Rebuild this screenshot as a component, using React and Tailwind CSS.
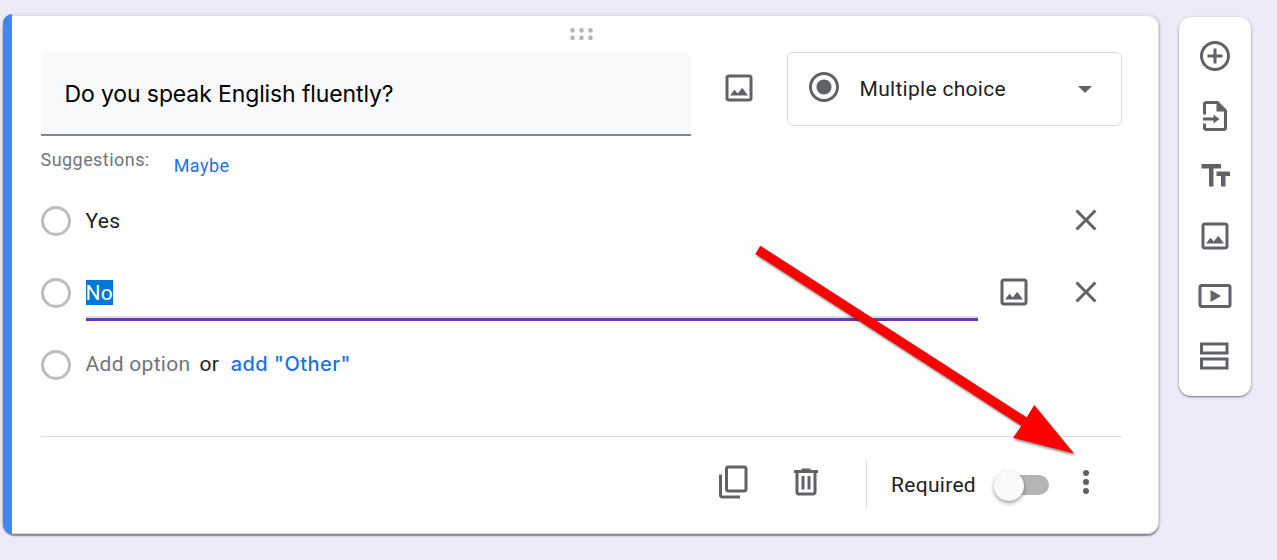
const Icon = ({ children, className = '' }) => (
  <svg viewBox="0 0 24 24" className={'block size-9 shrink-0 fill-[#5f6368] ' + className}>{children}</svg>
);

const ImageIcon = () => (
  <Icon>
    <path d="M19 5v14H5V5h14m0-2H5c-1.1 0-2 .9-2 2v14c0 1.100.9 2 2 2h14c1.100 0 2-.9 2-2V5c0-1.100-.9-2-2-2zm-4.860 8.860l-3 3.870L9 13.140 6 17h12l-3.860-5.140z" />
  </Icon>
);

const CloseIcon = () => (
  <Icon>
    <path d="M19 6.410L17.590 5 12 10.590 6.410 5 5 6.410 10.590 12 5 17.590 6.410 19 12 13.410 17.590 19 19 17.590 13.410 12z" />
  </Icon>
);

const Radio = () => <span className="size-[30px] shrink-0 rounded-full border-3 border-[#bdbdbd]" />;

function Toolbar() {
  return (
    <aside className="mt-[17px] ml-5 flex h-[379px] w-[72px] flex-col items-center gap-6 rounded-xl bg-white pt-[21px] shadow-[0_1px_3px_rgba(60,64,67,0.45),0_1px_1px_rgba(60,64,67,0.35)]">
      <Icon>
        <path d="M13 7h-2v4H7v2h4v4h2v-4h4v-2h-4V7zm-1-5C6.480 2 2 6.480 2 12s4.480 10 10 10 10-4.480 10-10S17.520 2 12 2zm0 18c-4.410 0-8-3.590-8-8s3.590-8 8-8 8 3.590 8 8-3.590 8-8 8z" />
      </Icon>
      <Icon>
        <path d="M14 2H6c-1.100 0-2 .9-2 2v7h2V4h7v5h5v11H6v-3H4v3c0 1.100.9 2 2 2h12c1.100 0 2-.9 2-2V8l-6-6z" />
        <path d="M4 13h7v-2l4 3-4 3v-2H4z" />
      </Icon>
      <Icon><path d="M3 4v3h5v12h3V7h5V4H3zm10 5v3h3v7h3v-7h3V9h-9z" /></Icon>
      <ImageIcon />
      <Icon>
        <path d="M21 4H3c-1.100 0-2 .9-2 2v12c0 1.100.9 2 2 2h18c1.100 0 2-.9 2-2V6c0-1.100-.9-2-2-2zm0 14H3V6h18v12zM9 8v8l7-4z" />
      </Icon>
      <Icon><path d="M2 3h19v8H2zM4 5v4h15V5zM2 13h19v8H2zM4 15v4h15v-4z" fillRule="evenodd" /></Icon>
    </aside>
  );
}

function Arrow() {
  return (
    <svg viewBox="0 0 340 230" className="pointer-events-none absolute top-[235px] left-[745px] h-[230px] w-[340px] drop-shadow-[1px_2px_1px_rgba(0,0,0,0.45)]">
      <path d="M15.300 10.700L281.700 182.300L289.300 170L329 218.500L268 202.700L276.400 190.700L10.300 19z" fill="#ff0000" />
    </svg>
  );
}

export default function App() {
  return (
    <div className="relative flex h-[560px] w-[1277px] items-start overflow-hidden bg-[#eeeaf8] pl-[3px] font-['Roboto',sans-serif] text-[21px] tracking-[0.3px] text-[#202124]">
      <main className="mt-[14px] flex h-[520px] w-[1156px] rounded-xl shadow-[0_1px_3px_rgba(60,64,67,0.5),0_2px_1px_rgba(60,64,67,0.4)]">
        <div className="w-[9px] shrink-0 rounded-l-[9px] bg-[#4285f4]" />
        <section className="mt-px flex min-w-0 flex-1 flex-col rounded-r-xl border-y border-r border-[#dadce0] bg-white pr-9 pl-[29px]">
          <div className="flex h-9 justify-center pt-3">
            <svg viewBox="0 0 24 14" className="h-3.5 w-6 fill-[#b5b5b5]">
              <circle cx="2.500" cy="2.400" r="2.300" /><circle cx="11.500" cy="2.400" r="2.300" /><circle cx="20.500" cy="2.400" r="2.300" />
              <circle cx="2.500" cy="9.900" r="2.300" /><circle cx="11.500" cy="9.900" r="2.300" /><circle cx="20.500" cy="9.900" r="2.300" />
            </svg>
          </div>

          <div className="flex h-[84px] items-start">
            <div className="flex h-[84px] w-[650px] items-center rounded-t-[6px] border-b-2 border-[#80868b] bg-[#f8f9fa] pt-0.5 pl-[23.5px] font-['Inter',sans-serif] text-[23px] tracking-[-0.12px] text-black">
              Do you speak English fluently?
            </div>
            <div className="mt-[18px] ml-[30px]"><ImageIcon /></div>
            <div className="ml-[30px] flex h-[74px] w-[335px] items-center rounded-[6px] border border-[#dadce0] pr-[29px] pl-[18px]">
              <Icon className="-mt-1">
                <path d="M12 7c-2.760 0-5 2.240-5 5s2.240 5 5 5 5-2.240 5-5-2.240-5-5-5zm0-5C6.480 2 2 6.480 2 12s4.480 10 10 10 10-4.480 10-10S17.520 2 12 2zm0 18c-4.420 0-8-3.580-8-8s3.580-8 8-8 8 3.580 8 8-3.580 8-8 8z" />
              </Icon>
              <span className="ml-[17.5px] flex-1 pt-0.5">Multiple choice</span>
              <svg viewBox="0 0 14 7" className="h-[7px] w-3.5 fill-[#5f6368]"><path d="M0 0h14L7 7z" /></svg>
            </div>
          </div>

          <div className="flex h-[49px] items-start pt-3 text-[18px] leading-6 tracking-[0.450px]">
            <span className="-ml-[0.5px] text-[#70757a]">Suggestions:</span>
            <span className="mt-1.5 ml-6 text-[#1a73e8]">Maybe</span>
          </div>

          <div className="flex h-[72px] items-center">
            <Radio />
            <span className="ml-[14.5px] flex-1 pt-0.5">Yes</span>
            <div className="mr-[18px] -mt-0.5"><CloseIcon /></div>
          </div>

          <div className="flex h-[72px] items-center">
            <Radio />
            <div className="ml-[15px] flex h-14 w-[892px] flex-col justify-between">
              <span className="mt-[15px] h-[25px] w-[27px] bg-[#0078d7] leading-[27px] text-white"><span className="-ml-[0.5px]">No</span></span>
              <span className="h-[5px] border-t-2 border-[#dadce0] bg-[#673ab7]" />
            </div>
            <div className="-mt-0.5 ml-[18px]"><ImageIcon /></div>
            <div className="-mt-0.5 ml-9"><CloseIcon /></div>
          </div>

          <div className="flex h-[72px] items-center">
            <Radio />
            <span className="ml-[14.5px] text-[#70757a]">Add option</span>
            <span className="ml-[9px]">or</span>
            <span className="ml-[11.5px] pb-0.5 font-['Inter',sans-serif] text-[20px] font-medium tracking-[0.5px] text-[#1a73e8]">add "Other"</span>
          </div>

          <div className="mt-[35px] flex h-[97px] border-t border-[#dadce0]">
            <div className="mt-[27px] ml-[675px]">
              <Icon>
                <path transform="matrix(1 0 0 -1 0 24)" d="M16 1H4c-1.100 0-2 .9-2 2v14h2V3h12V1zm3 4H8c-1.100 0-2 .9-2 2v14c0 1.100.9 2 2 2h11c1.100 0 2-.9 2-2V7c0-1.100-.9-2-2-2zm0 16H8V7h11v14z" />
              </Icon>
            </div>
            <div className="mt-[27px] ml-9">
              <Icon><path d="M15 4V3H9v1H4v2h1v13c0 1.100.9 2 2 2h10c1.100 0 2-.9 2-2V6h1V4h-5zm2 15H7V6h10v13zM9 8h2v9H9zm4 0h2v9h-2z" /></Icon>
            </div>
            <div className="mt-6 ml-[42px] h-12 w-px bg-[#dadce0]" />
            <span className="mt-8 ml-6 leading-8">Required</span>
            <div className="mt-[34px] ml-[18px] flex h-[30px] w-[55px] items-center">
              <span className="z-10 size-[30px] shrink-0 rounded-full bg-[#fafafa] shadow-[0_2px_4px_rgba(0,0,0,0.4)]" />
              <span className="-mt-0.5 -ml-5 h-5 flex-1 rounded-full bg-[#b5b5b5]" />
            </div>
            <div className="mt-[27px] ml-[19px]">
              <Icon><circle cx="12" cy="6" r="2" /><circle cx="12" cy="12" r="2" /><circle cx="12" cy="18" r="2" /></Icon>
            </div>
          </div>
        </section>
      </main>
      <Toolbar />
      <Arrow />
    </div>
  );
}
